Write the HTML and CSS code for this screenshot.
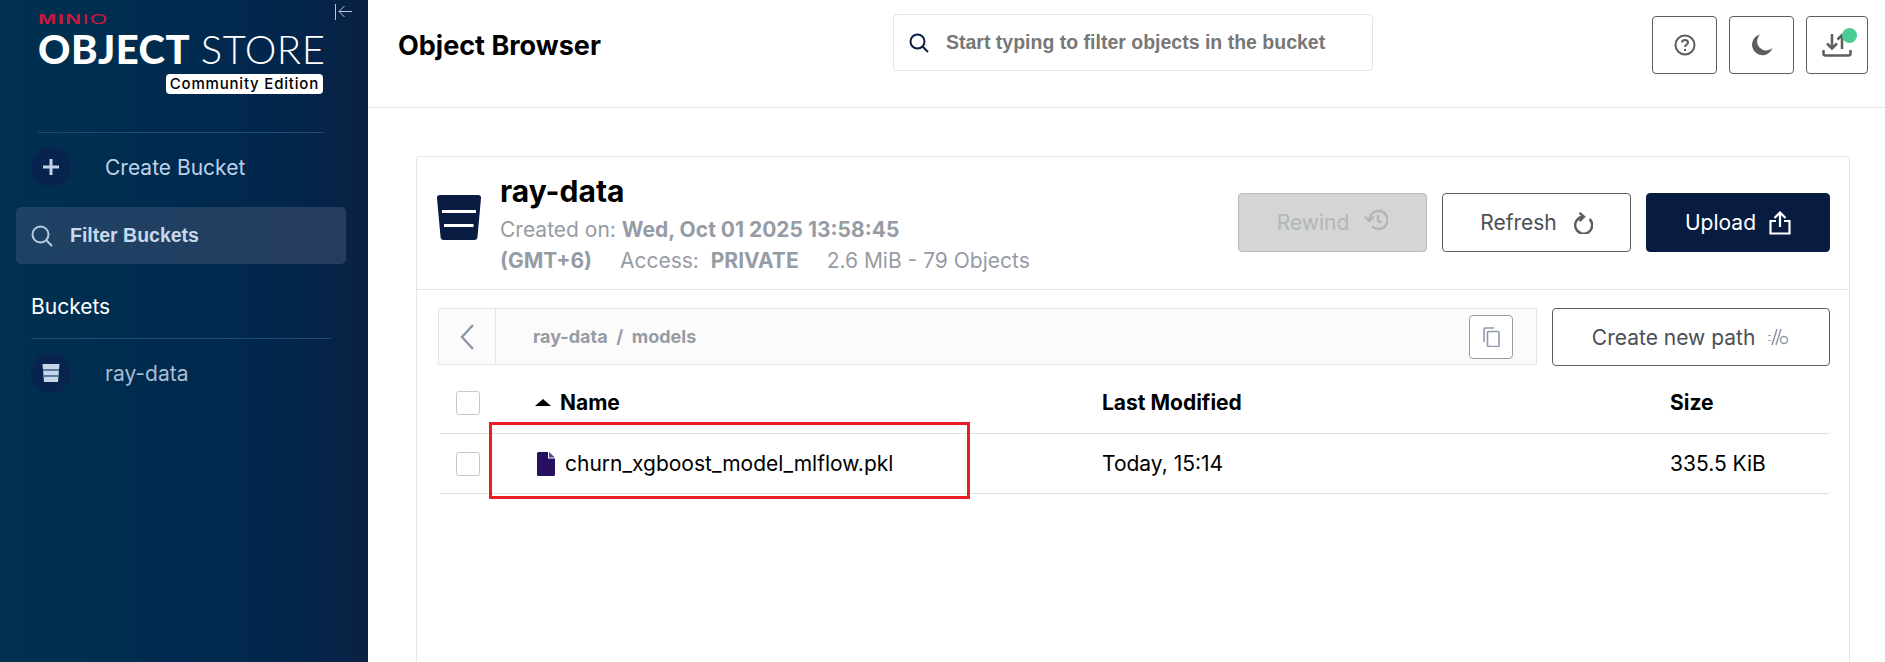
FILE: index.html
```html
<!DOCTYPE html>
<html lang="en">
<head>
    <meta charset="UTF-8">
    <title>Object Browser</title>
    <link rel="stylesheet" href="styles.css">
</head>
<body>
    <aside class="sidebar">
        <div class="brand">
            <div class="brand-minio">MIN<span class="brand-thin">IO</span></div>
            <div class="brand-name"><b>OBJECT</b> <span>STORE</span></div>
            <div class="brand-edition"><span>Community Edition</span></div>
        </div>
        <svg class="collapse" viewBox="0 0 18 18" width="18" height="18" fill="none" stroke="#b9c6d6" stroke-width="1">
            <path d="M1.5 1v16"/>
            <path d="M18 8.5H5M10.5 3 5 8.5l5.500 5.500"/>
        </svg>
        <div class="side-rule"></div>
        <div class="side-item">
            <span class="side-circle">
                <svg viewBox="0 0 18 18" width="18" height="18" stroke="#c3d4e6" stroke-width="3"><path d="M9 1v16M1 9h16"/></svg>
            </span>
            <span class="side-label">Create Bucket</span>
        </div>
        <div class="side-filter">
            <svg viewBox="0 0 22 22" width="22" height="22" fill="none" stroke="#b9cde2" stroke-width="2"><circle cx="9.500" cy="9.500" r="8"/><path d="m15 15 6 6"/></svg>
            <span>Filter Buckets</span>
        </div>
        <div class="side-title">Buckets</div>
        <div class="side-item side-bucket">
            <span class="side-circle">
                <svg viewBox="0 0 18 18" width="18" height="18">
                    <path d="M0.500 0h17l-1.500 18H2z" fill="#c6d5e8"/>
                    <path d="M1 6h16M1.500 12h15" stroke="#3d5d85" stroke-width="1.500"/>
                </svg>
            </span>
            <span class="side-label side-label-dim">ray-data</span>
        </div>
    </aside>

    <main class="main">
        <header class="topbar">
            <h1 class="page-title">Object Browser</h1>
            <div class="search">
                <svg viewBox="0 0 20 20" width="20" height="20" fill="none" stroke="#0b1f44" stroke-width="2"><circle cx="8.500" cy="8.500" r="7"/><path d="m13.500 13.500 5.500 5.500"/></svg>
                <span>Start typing to filter objects in the bucket</span>
            </div>
            <div class="top-actions">
                <button class="icon-btn">
                    <svg viewBox="0 0 22 22" width="22" height="22" fill="none" stroke="#5b5d5e" stroke-width="2">
                        <circle cx="11" cy="11" r="9.500"/>
                        <path d="M8 8.500C8 6.800 9.300 6 11 6s3 1 3 2.500c0 2-3 2-3 4.500"/>
                        <path d="M11 15v2"/>
                    </svg>
                </button>
                <button class="icon-btn">
                    <svg viewBox="0 0 22 22" width="22" height="22"><path d="M9 .5A10.500 10.500 0 1 0 21.500 14 9 9 0 0 1 9 .5z" fill="#5b5d5e"/></svg>
                </button>
                <button class="icon-btn icon-btn-narrow">
                    <svg viewBox="0 0 30 24" width="30" height="24" fill="none" stroke="#5b5d5e" stroke-width="2.500">
                        <path d="M10 1v14M5 10.500l5 5 5-5"/>
                        <path d="M20 16V2M15.500 6.500 20 2l4.500 4.500"/>
                        <path d="M1.500 17v3.500a2 2 0 0 0 2 2h23a2 2 0 0 0 2-2V17"/>
                    </svg>
                    <span class="green-dot"></span>
                </button>
            </div>
        </header>

        <div class="content">
            <section class="bucket-head">
                <svg class="bucket-icon" viewBox="0 0 44 45" width="44" height="45">
                    <path d="M3 0h38a3 3 0 0 1 3 3.300L40.500 41.500a3.500 3.500 0 0 1-3.500 3.500H7a3.500 3.500 0 0 1-3.500-3.500L0 3.300A3 3 0 0 1 3 0z" fill="#081c42"/>
                    <path d="M5 16.500h34M7 30.500h29.500" stroke="#fff" stroke-width="3"/>
                </svg>
                <div class="bucket-info">
                    <h2 class="bucket-name">ray-data</h2>
                    <div class="bucket-meta">Created on: <b>Wed, Oct 01 2025 13:58:45</b></div>
                    <div class="bucket-meta bucket-meta-row">
                        <b>(GMT+6)</b>
                        <span>Access: &nbsp;<b>PRIVATE</b></span>
                        <span>2.6 MiB - 79 Objects</span>
                    </div>
                </div>
                <div class="bucket-actions">
                    <button class="btn btn-disabled">Rewind
                        <svg class="rewind-icon" viewBox="0 0 24 22" width="24" height="22" fill="none" stroke="#b4b6b6" stroke-width="2.400">
                            <path d="M5.500 11a9 9 0 1 1 2.700 6.400"/>
                            <path d="M1 7.500 5.500 12 10 7.500"/>
                            <path d="M14 6v5.500l3.500 2"/>
                        </svg>
                    </button>
                    <button class="btn btn-refresh">Refresh
                        <svg viewBox="0 0 20 22" width="20" height="22" fill="none" stroke="#5b5d5e" stroke-width="2.400">
                            <path d="M16.500 7A8.500 8.500 0 1 1 9.500 4.800"/>
                            <path d="M6.500.8 11 4.800 6.500 9"/>
                        </svg>
                    </button>
                    <button class="btn btn-primary">Upload
                        <svg viewBox="0 0 22 24" width="22" height="24" fill="none" stroke="#fff" stroke-width="2.200">
                            <path d="M11 16V2M5.500 7 11 1.500 16.500 7"/>
                            <path d="M7 10H1.500v12.500h19V10H15"/>
                        </svg>
                    </button>
                </div>
            </section>

            <section class="browser">
                <div class="path-row">
                    <div class="breadcrumb">
                        <span class="crumb-back">
                            <svg viewBox="0 0 14 26" width="14" height="26" fill="none" stroke="#8b97a6" stroke-width="2.400"><path d="M13 1 2 13l11 12"/></svg>
                        </span>
                        <span class="crumb-path">ray-data &nbsp;/&nbsp; models</span>
                        <span class="crumb-copy">
                            <svg viewBox="0 0 18 20" width="18" height="20" fill="none" stroke="#8f9aa8" stroke-width="1.600">
                                <path d="M2 15V2.500a1.500 1.500 0 0 1 1.500-1.500H12"/>
                                <rect x="5.500" y="4.500" width="11.500" height="15" rx="1"/>
                            </svg>
                        </span>
                    </div>
                    <button class="btn btn-path">Create new path
                        <svg viewBox="0 0 22 18" width="22" height="18" fill="none" stroke="#8f9aa8" stroke-width="1.500">
                            <path d="M1.500 7v1M1.500 12v1" stroke-width="2.400"/>
                            <path d="M9 1 4 17M13 1 8 17"/>
                            <circle cx="16" cy="12" r="3.500"/>
                        </svg>
                    </button>
                </div>
                <div class="table">
                    <div class="table-row table-head">
                        <span class="checkbox"></span>
                        <span class="name-cell"><i class="sort-up"></i>Name</span>
                        <span>Last Modified</span>
                        <span>Size</span>
                    </div>
                    <div class="table-row">
                        <span class="checkbox"></span>
                        <span class="name-cell">
                            <svg class="file-icon" viewBox="0 0 18 24" width="18" height="24">
                                <path d="M1.500 0H11v6.500h7v16a1.500 1.500 0 0 1-1.500 1.500h-15A1.500 1.500 0 0 1 0 22.500v-21A1.500 1.500 0 0 1 1.500 0z" fill="#26105f"/>
                                <path d="M12 0l6 5.500h-6z" fill="#5a4490"/>
                            </svg>
                            churn_xgboost_model_mlflow.pkl
                        </span>
                        <span>Today, 15:14</span>
                        <span>335.5 KiB</span>
                    </div>
                    <div class="highlight"></div>
                </div>
            </section>
        </div>
    </main>
</body>
</html>
```

FILE: styles.css
```css
* {
    box-sizing: border-box;
}
html, body {
    height: 100%;
}
body {
    margin: 0;
    display: flex;
    height: 662px;
    overflow: hidden;
    background: #fff;
    color: #000;
    font-family: Inter, Arial, sans-serif;
}
button {
    font-family: inherit;
    cursor: pointer;
}

/* sidebar */
.sidebar {
    position: relative;
    width: 368px;
    flex-shrink: 0;
    padding: 12px 0 0;
    background: linear-gradient(90deg, #01314f 0%, #002a4f 50%, #03264b 80%, #0b2044 100%);
}
.brand {
    margin-left: 38px;
    width: 286px;
    height: 120px;
}
.brand-minio {
    height: 13px;
    font-family: "Liberation Sans", Arial, sans-serif;
    font-size: 15px;
    line-height: 13px;
    font-weight: 700;
    color: #c8193c;
    letter-spacing: 1px;
    transform: scaleX(1.46);
    transform-origin: left;
}
.brand-thin {
    font-weight: 400;
}
.brand-name {
    margin-top: 5px;
    font-family: Lato, sans-serif;
    font-size: 40px;
    line-height: 38px;
    color: #fff;
    white-space: nowrap;
    letter-spacing: 0.5px;
}
.brand-name b {
    font-weight: 900;
}
.brand-name span {
    font-weight: 300;
}
.brand-edition {
    display: flex;
    justify-content: flex-end;
    margin: 6px 1px 0 0;
}
.brand-edition span {
    padding: 0 4px;
    background: #fff;
    border-radius: 4px;
    color: #000;
    font-size: 15px;
    line-height: 20px;
    font-weight: 500;
    letter-spacing: 0.8px;
    white-space: nowrap;
}
.collapse {
    position: absolute;
    top: 3px;
    left: 334px;
}
.side-rule {
    height: 1px;
    margin-left: 38px;
    width: 285px;
    background: #1c4b76;
}
.side-item {
    display: flex;
    align-items: center;
    gap: 34px;
    margin: 14px 0 0 31px;
    height: 40px;
}
.side-circle {
    display: flex;
    align-items: center;
    justify-content: center;
    width: 40px;
    height: 40px;
    border-radius: 50%;
    background: #08244e;
}
.side-label {
    font-size: 21px;
    color: #bdd2e8;
}
.side-label-dim {
    color: #a9bdd3;
}
.side-filter {
    display: flex;
    align-items: center;
    gap: 17px;
    height: 57px;
    margin: 20px 22px 0 16px;
    padding-left: 15px;
    background: linear-gradient(90deg, #1d4264 0%, #263c60 100%);
    border-radius: 5px;
    color: #c8d9ec;
    font-family: "Liberation Sans", Arial, sans-serif;
    font-size: 19.500px;
    font-weight: 700;
}
.side-title {
    margin: 32px 37px 0 31px;
    padding-bottom: 19px;
    border-bottom: 1px solid #1c4b76;
    height: 43px;
    line-height: 22px;
    font-size: 21px;
    color: #fff;
}
.side-bucket {
    margin-top: 14px;
}

/* top bar */
.main {
    flex: 1;
    min-width: 0;
}
.topbar {
    position: relative;
    display: flex;
    align-items: center;
    height: 108px;
    padding: 0 17px 0 30px;
    border-bottom: 1px solid #e5e5e5;
}
.page-title {
    margin: -17px 0 0;
    width: 495px;
    font-size: 27px;
    font-weight: 700;
}
.search {
    display: flex;
    align-items: center;
    gap: 17px;
    width: 480px;
    height: 57px;
    margin-top: -22px;
    padding-left: 15px;
    border: 1px solid #e2e2e2;
    border-radius: 4px;
    color: #777;
    font-family: "Liberation Sans", Arial, sans-serif;
    font-size: 19.500px;
    font-weight: 700;
    white-space: nowrap;
}
.top-actions {
    display: flex;
    gap: 12px;
    margin-left: auto;
    margin-top: -17px;
}
.icon-btn {
    position: relative;
    display: flex;
    align-items: center;
    justify-content: center;
    width: 65px;
    height: 58px;
    padding: 0;
    background: #fff;
    border: 1px solid #5b5d5e;
    border-radius: 4px;
}
.icon-btn-narrow {
    width: 62px;
}
.green-dot {
    position: absolute;
    top: 11px;
    right: 10px;
    width: 15px;
    height: 15px;
    border-radius: 50%;
    background: #4ccb92;
}

/* bucket card */
.content {
    padding: 48px 35px 0 48px;
}
.bucket-head {
    display: flex;
    align-items: flex-start;
    height: 134px;
    padding: 20px 19px 0 20px;
    border: 1px solid #e5e5e5;
    border-radius: 3px 3px 0 0;
}
.bucket-icon {
    margin-top: 18px;
    flex-shrink: 0;
}
.bucket-info {
    margin-left: 19px;
}
.bucket-name {
    margin: -4px 0 0;
    font-size: 30px;
    line-height: 36px;
    font-weight: 700;
}
.bucket-meta {
    margin-top: 7px;
    font-size: 21px;
    line-height: 27px;
    color: #969ca5;
}
.bucket-meta b {
    font-weight: 700;
}
.bucket-meta-row {
    margin-top: 4px;
    display: flex;
    gap: 28px;
}
.bucket-actions {
    display: flex;
    gap: 15px;
    margin-left: auto;
    margin-top: 16px;
}
.btn {
    display: flex;
    align-items: center;
    justify-content: center;
    gap: 13px;
    height: 59px;
    padding: 0;
    background: #fff;
    border: 1px solid #5b5d5e;
    border-radius: 4px;
    color: #4a4f55;
    font-size: 21px;
}
.btn-disabled {
    width: 189px;
    gap: 15px;
    background: #d4d5d5;
    border-color: #b9baba;
    color: #b4b6b6;
}
.rewind-icon {
    margin-bottom: 5px;
}
.btn-refresh {
    width: 189px;
    gap: 16px;
}
.btn-primary {
    width: 184px;
    background: #081c42;
    border-color: #081c42;
    color: #fff;
}

/* path row and table */
.browser {
    position: relative;
    height: 400px;
    padding: 18px 19px 0 21px;
    border: 1px solid #e5e5e5;
    border-top-width: 0;
}
.path-row {
    display: flex;
    gap: 15px;
}
.breadcrumb {
    display: flex;
    align-items: center;
    width: 1100px;
    height: 57px;
    background: #fbfbfb;
    border: 1px solid #e5e5e5;
}
.crumb-back {
    display: flex;
    align-items: center;
    justify-content: center;
    width: 57px;
    height: 100%;
    border-right: 1px solid #e5e5e5;
}
.crumb-path {
    margin-left: 37px;
    color: #969ca5;
    font-size: 18px;
    font-weight: 700;
}
.crumb-copy {
    display: flex;
    align-items: center;
    justify-content: center;
    width: 44px;
    height: 44px;
    margin-left: auto;
    margin-right: 23px;
    border: 1px solid #969ca5;
    border-radius: 4px;
    background: #fff;
}
.btn-path {
    width: 278px;
    height: 58px;
}
.table {
    position: relative;
    margin: 12px 1px 0 2px;
}
.table-row {
    display: grid;
    grid-template-columns: 95px 567px 568px 1fr;
    align-items: center;
    height: 60px;
    border-bottom: 1px solid #e0e0e0;
    font-size: 21px;
}
.table-head {
    height: 56px;
    padding-bottom: 6px;
    font-weight: 700;
}
.checkbox {
    width: 24px;
    height: 24px;
    margin-left: 16px;
    background: #fff;
    border: 1px solid #c8c8c8;
    border-radius: 3px;
}
.name-cell {
    display: flex;
    align-items: center;
}
.sort-up {
    width: 0;
    height: 0;
    margin-right: 9px;
    border-left: 8px solid transparent;
    border-right: 8px solid transparent;
    border-bottom: 7px solid #000;
}
.file-icon {
    margin: 0 10px 0 2px;
}

/* annotation drawn over the table */
.highlight {
    position: absolute;
    top: 44px;
    left: 49px;
    width: 481px;
    height: 77px;
    border: 3px solid #ed1c24;
}
```
